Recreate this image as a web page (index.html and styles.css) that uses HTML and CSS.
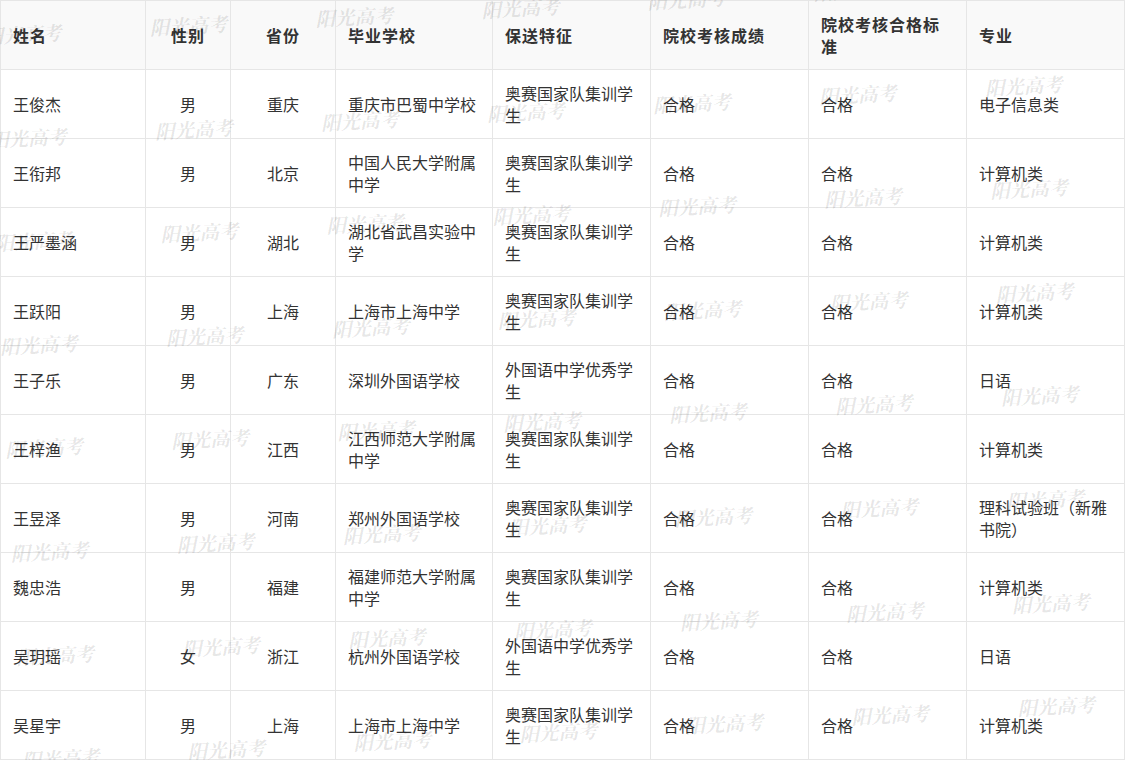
FILE: index.html
```html
<!DOCTYPE html>
<html lang="zh-CN">
<head>
<meta charset="utf-8">
<title>保送生名单</title>
<link rel="stylesheet" href="styles.css">
</head>
<body>
<div class="sheet">
  <table class="list">
    <colgroup>
      <col class="c-name"><col class="c-sex"><col class="c-prov"><col class="c-school">
      <col class="c-feat"><col class="c-score"><col class="c-std"><col class="c-major">
    </colgroup>
    <thead>
      <tr>
        <th>姓名</th><th class="center">性别</th><th class="center">省份</th><th>毕业学校</th>
        <th>保送特征</th><th>院校考核成绩</th><th>院校考核合格标准</th><th>专业</th>
      </tr>
    </thead>
    <tbody>
      <tr><td>王俊杰</td><td class="center">男</td><td class="center">重庆</td><td>重庆市巴蜀中学校</td><td>奥赛国家队集训学生</td><td>合格</td><td>合格</td><td>电子信息类</td></tr>
      <tr><td>王衔邦</td><td class="center">男</td><td class="center">北京</td><td>中国人民大学附属中学</td><td>奥赛国家队集训学生</td><td>合格</td><td>合格</td><td>计算机类</td></tr>
      <tr><td>王严墨涵</td><td class="center">男</td><td class="center">湖北</td><td>湖北省武昌实验中学</td><td>奥赛国家队集训学生</td><td>合格</td><td>合格</td><td>计算机类</td></tr>
      <tr><td>王跃阳</td><td class="center">男</td><td class="center">上海</td><td>上海市上海中学</td><td>奥赛国家队集训学生</td><td>合格</td><td>合格</td><td>计算机类</td></tr>
      <tr><td>王子乐</td><td class="center">男</td><td class="center">广东</td><td>深圳外国语学校</td><td>外国语中学优秀学生</td><td>合格</td><td>合格</td><td>日语</td></tr>
      <tr><td>王梓渔</td><td class="center">男</td><td class="center">江西</td><td>江西师范大学附属中学</td><td>奥赛国家队集训学生</td><td>合格</td><td>合格</td><td>计算机类</td></tr>
      <tr><td>王昱泽</td><td class="center">男</td><td class="center">河南</td><td>郑州外国语学校</td><td>奥赛国家队集训学生</td><td>合格</td><td>合格</td><td>理科试验班（新雅书院）</td></tr>
      <tr><td>魏忠浩</td><td class="center">男</td><td class="center">福建</td><td>福建师范大学附属中学</td><td>奥赛国家队集训学生</td><td>合格</td><td>合格</td><td>计算机类</td></tr>
      <tr><td>吴玥瑶</td><td class="center">女</td><td class="center">浙江</td><td>杭州外国语学校</td><td>外国语中学优秀学生</td><td>合格</td><td>合格</td><td>日语</td></tr>
      <tr><td>吴星宇</td><td class="center">男</td><td class="center">上海</td><td>上海市上海中学</td><td>奥赛国家队集训学生</td><td>合格</td><td>合格</td><td>计算机类</td></tr>
    </tbody>
  </table>
  <div class="watermarks" aria-hidden="true">
    <span>阳光高考</span><span>阳光高考</span><span>阳光高考</span><span>阳光高考</span><span>阳光高考</span><span>阳光高考</span><span>阳光高考</span>
    <span>阳光高考</span><span>阳光高考</span><span>阳光高考</span><span>阳光高考</span><span>阳光高考</span><span>阳光高考</span><span>阳光高考</span>
    <span>阳光高考</span><span>阳光高考</span><span>阳光高考</span><span>阳光高考</span><span>阳光高考</span><span>阳光高考</span><span>阳光高考</span>
    <span>阳光高考</span><span>阳光高考</span><span>阳光高考</span><span>阳光高考</span><span>阳光高考</span><span>阳光高考</span><span>阳光高考</span>
    <span>阳光高考</span><span>阳光高考</span><span>阳光高考</span><span>阳光高考</span><span>阳光高考</span><span>阳光高考</span><span>阳光高考</span>
    <span>阳光高考</span><span>阳光高考</span><span>阳光高考</span><span>阳光高考</span><span>阳光高考</span><span>阳光高考</span><span>阳光高考</span>
    <span>阳光高考</span><span>阳光高考</span><span>阳光高考</span><span>阳光高考</span><span>阳光高考</span><span>阳光高考</span><span>阳光高考</span>
    <span>阳光高考</span><span>阳光高考</span><span>阳光高考</span><span>阳光高考</span><span>阳光高考</span><span>阳光高考</span><span>阳光高考</span>
  </div>
</div>
</body>
</html>
```
FILE: styles.css
```css
html, body {
  margin: 0;
  padding: 0;
  background: #ffffff;
}

body {
  font-family: "Noto Sans CJK SC", "Liberation Sans", sans-serif;
  color: #333333;
  overflow: hidden;
}

.sheet {
  position: relative;
  width: 1125px;
  height: 760px;
  overflow: hidden;
}

.list {
  border-collapse: collapse;
  table-layout: fixed;
  width: 1124px;
  font-size: 16px;
  line-height: 22px;
}

.c-name { width: 145px; }
.c-sex { width: 85px; }
.c-prov { width: 105px; }
.c-school { width: 157px; }
.c-feat { width: 158px; }
.c-score { width: 158px; }
.c-std { width: 158px; }
.c-major { width: 158px; }

.list th,
.list td {
  border: 1px solid #e6e6e6;
  height: 69px;
  padding: 0 12px;
  text-align: left;
  vertical-align: middle;
  box-sizing: border-box;
}

.list th {
  background: #f9f9f9;
  font-weight: bold;
  letter-spacing: 1px;
  color: #333333;
}

.list .center {
  text-align: center;
}

.watermarks {
  position: absolute;
  left: -17px;
  top: 26px;
  transform-origin: 0 0;
  transform: rotate(-3deg);
  display: grid;
  grid-template-columns: repeat(7, 166.2px);
  grid-auto-rows: 103.6px;
  pointer-events: none;
}

.watermarks span {
  font-family: "Noto Serif CJK SC", "Noto Sans CJK SC", serif;
  font-size: 19.5px;
  line-height: 20px;
  font-weight: bold;
  font-style: italic;
  color: rgba(0, 0, 0, 0.1);
  white-space: nowrap;
}
```
